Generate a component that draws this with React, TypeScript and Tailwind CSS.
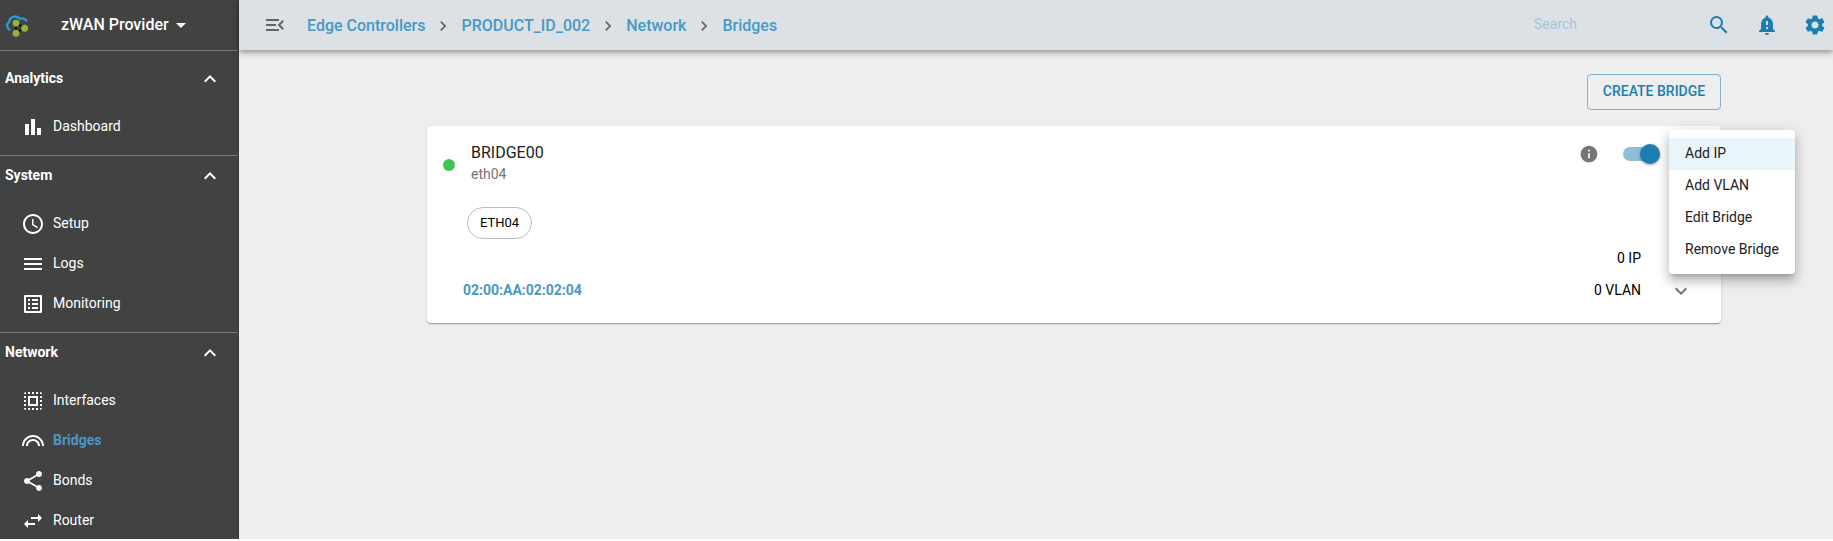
import { ReactNode } from "react";
import {
  MdArrowDropDown, MdBarChart, MdChevronRight, MdExpandLess, MdExpandMore, MdInfo, MdListAlt, MdLooks, MdMenu,
  MdMenuOpen, MdNotificationImportant, MdSchedule, MdSearch, MdSelectAll, MdSettings, MdShare, MdSwapHoriz,
} from "react-icons/md";

type Item = { label: string; icon: ReactNode; active?: boolean };

const sections: { title: string; items: Item[] }[] = [
  { title: "Analytics", items: [{ label: "Dashboard", icon: <MdBarChart size={24} /> }] },
  {
    title: "System",
    items: [
      { label: "Setup", icon: <MdSchedule size={24} /> },
      { label: "Logs", icon: <MdMenu size={24} /> },
      { label: "Monitoring", icon: <MdListAlt size={24} /> },
    ],
  },
  {
    title: "Network",
    items: [
      { label: "Interfaces", icon: <MdSelectAll size={24} /> },
      { label: "Bridges", icon: <MdLooks size={24} />, active: true },
      { label: "Bonds", icon: <MdShare size={24} /> },
      { label: "Router", icon: <MdSwapHoriz size={24} /> },
    ],
  },
];

const crumbs = ["Edge Controllers", "PRODUCT_ID_002", "Network", "Bridges"];
const menu = ["Add IP", "Add VLAN", "Edit Bridge", "Remove Bridge"];

function Logo() {
  return (
    <svg width="24" height="24" viewBox="0 0 24 24" fill="none">
      <path d="M5.2 17.2C1.4 14.6 1.2 10.6 4.2 9C4.4 3.6 11.4 1.6 14.8 5.8C17.4 4.8 20.2 5.8 22 8.2" stroke="#2a9bd6" strokeWidth="2.3" />
      <path d="M11 10V20M11 10L19 15L11 20" stroke="#111" strokeWidth="2.2" />
      <circle cx="11" cy="10.2" r="3.4" fill="#8bb53c" />
      <circle cx="19.6" cy="15.2" r="3.5" fill="#8bb53c" />
      <circle cx="11" cy="20.2" r="3.5" fill="#8bb53c" />
    </svg>
  );
}

function Sidebar() {
  return (
    <aside className="flex w-[239px] shrink-0 flex-col overflow-hidden border-r border-[#383838] bg-[#424242] text-white">
      <div className="flex h-[51px] shrink-0 items-center border-b border-[#767676] pl-[5px]">
        <Logo />
        <span className="ml-8 text-base font-medium leading-6">zWAN Provider</span>
        <MdArrowDropDown size={24} />
      </div>
      {sections.map((s, i) => (
        <div key={s.title} className={i === 0 ? "shrink-0 border-b border-[#767676] pb-[9px] pt-[7px]" : i === 1 ? "shrink-0 border-b border-[#767676] pb-[9px]" : "shrink-0"}>
          <div className={i === 0 ? "mb-2 flex h-10 items-center justify-between pl-[5px] pr-4 text-sm font-bold" : "mb-[9px] flex h-[38px] items-center justify-between pl-[5px] pr-4 text-sm font-bold"}>
            {s.title}
            <MdExpandLess size={24} className="mt-0.5" />
          </div>
          {s.items.map((it) => (
            <div key={it.label} className="flex h-10 items-center gap-2 pl-[21px] text-sm">
              <span className="pt-0.5">{it.icon}</span>
              <span className={it.active ? "font-bold text-[#4899c4]" : ""}>{it.label}</span>
            </div>
          ))}
        </div>
      ))}
    </aside>
  );
}

function TopBar() {
  return (
    <header className="z-10 flex h-[50px] shrink-0 items-center bg-[#dce1e5] pl-6 pr-1.5 shadow-[0_2px_4px_-1px_rgba(0,0,0,0.2),0_4px_5px_0_rgba(0,0,0,0.14),0_1px_10px_0_rgba(0,0,0,0.12)]">
      <MdMenuOpen size={24} className="text-[#5f6569]" />
      <nav className="ml-5 flex items-center pt-px text-base font-medium text-[#4899c4]">
        {crumbs.map((c, i) => (
          <div key={c} className="flex items-center">
            {i > 0 && <MdChevronRight size={20} className="mx-2 text-[#5f6569]" />}
            {c}
          </div>
        ))}
      </nav>
      <input placeholder="Search" className="mb-0.5 ml-auto w-[173px] text-sm placeholder-[#a5c6da] outline-none" />
      <div className="flex gap-6 text-[#1c7eb0]">
        <MdSearch size={24} />
        <MdNotificationImportant size={24} />
        <MdSettings size={24} />
      </div>
    </header>
  );
}

function ActionMenu() {
  return (
    <ul className="absolute left-[1242px] top-1 z-20 h-36 w-[126px] rounded bg-white py-2 text-sm text-[#212121] shadow-[0_5px_5px_-3px_rgba(0,0,0,0.2),0_8px_10px_1px_rgba(0,0,0,0.14),0_3px_14px_2px_rgba(0,0,0,0.12)]">
      {menu.map((m, i) => (
        <li key={m} className={i === 0 ? "flex h-8 items-center whitespace-nowrap bg-[#e8f6fb] px-4 pb-0.5" : "flex h-8 items-center whitespace-nowrap px-4 pb-0.5"}>
          {m}
        </li>
      ))}
    </ul>
  );
}

function BridgeCard() {
  return (
    <section className="relative mt-4 flex h-[197px] justify-between rounded bg-white text-[#212121] shadow-[0_2px_1px_-1px_rgba(0,0,0,0.2),0_1px_1px_0_rgba(0,0,0,0.14),0_1px_3px_0_rgba(0,0,0,0.12)]">
      <div className="pl-4">
        <div className="flex items-center gap-4 pt-4">
          <span className="mt-0.5 size-3 rounded-full bg-[#3fc552]" />
          <div>
            <div className="text-base leading-[22px]">BRIDGE00</div>
            <div className="pb-0.5 text-sm leading-5 text-[#757575]">eth04</div>
          </div>
        </div>
        <div className="ml-6 mt-[21px] flex h-8 w-[65px] items-center justify-center rounded-full border border-[#bdbdbd] text-[13px] text-black">ETH04</div>
        <div className="ml-5 mt-[41px] text-sm font-bold leading-5 text-[#4899c4]">02:00:AA:02:02:04</div>
      </div>
      <div className="flex w-[204px] flex-col pt-2">
        <div className="flex h-10 items-center pl-[62px]">
          <MdInfo size={20} className="text-[#757575]" />
          <div className="ml-6 flex h-[14px] w-[34px] items-center justify-end rounded-full bg-[#8dbed7]">
            <span className="-mr-[3px] size-5 shrink-0 rounded-full bg-[#1c7eb0] shadow-[0_1px_3px_rgba(0,0,0,0.4)]" />
          </div>
        </div>
        <div className="mt-[68px] flex h-8 items-center text-sm text-black">
          <span className="w-[124px] text-right">0 IP</span>
        </div>
        <div className="flex h-8 items-center text-sm text-black">
          <span className="w-[124px] text-right">0 VLAN</span>
          <MdExpandMore size={24} className="ml-7 mt-0.5 text-[#757575]" />
        </div>
      </div>
      <ActionMenu />
    </section>
  );
}

export default function App() {
  return (
    <div className="h-[541px] bg-white font-['Roboto',sans-serif]">
      <div className="flex h-[539px] overflow-hidden">
        <Sidebar />
        <div className="flex min-w-0 flex-1 flex-col bg-[#eeeeee]">
          <TopBar />
          <main className="ml-[188px] mt-6 flex w-[1294px] flex-col">
            <button className="h-9 w-[134px] self-end rounded border border-[#7eb4d0] pb-0.5 text-sm font-medium text-[#1c7eb0]">CREATE BRIDGE</button>
            <BridgeCard />
          </main>
        </div>
      </div>
    </div>
  );
}
